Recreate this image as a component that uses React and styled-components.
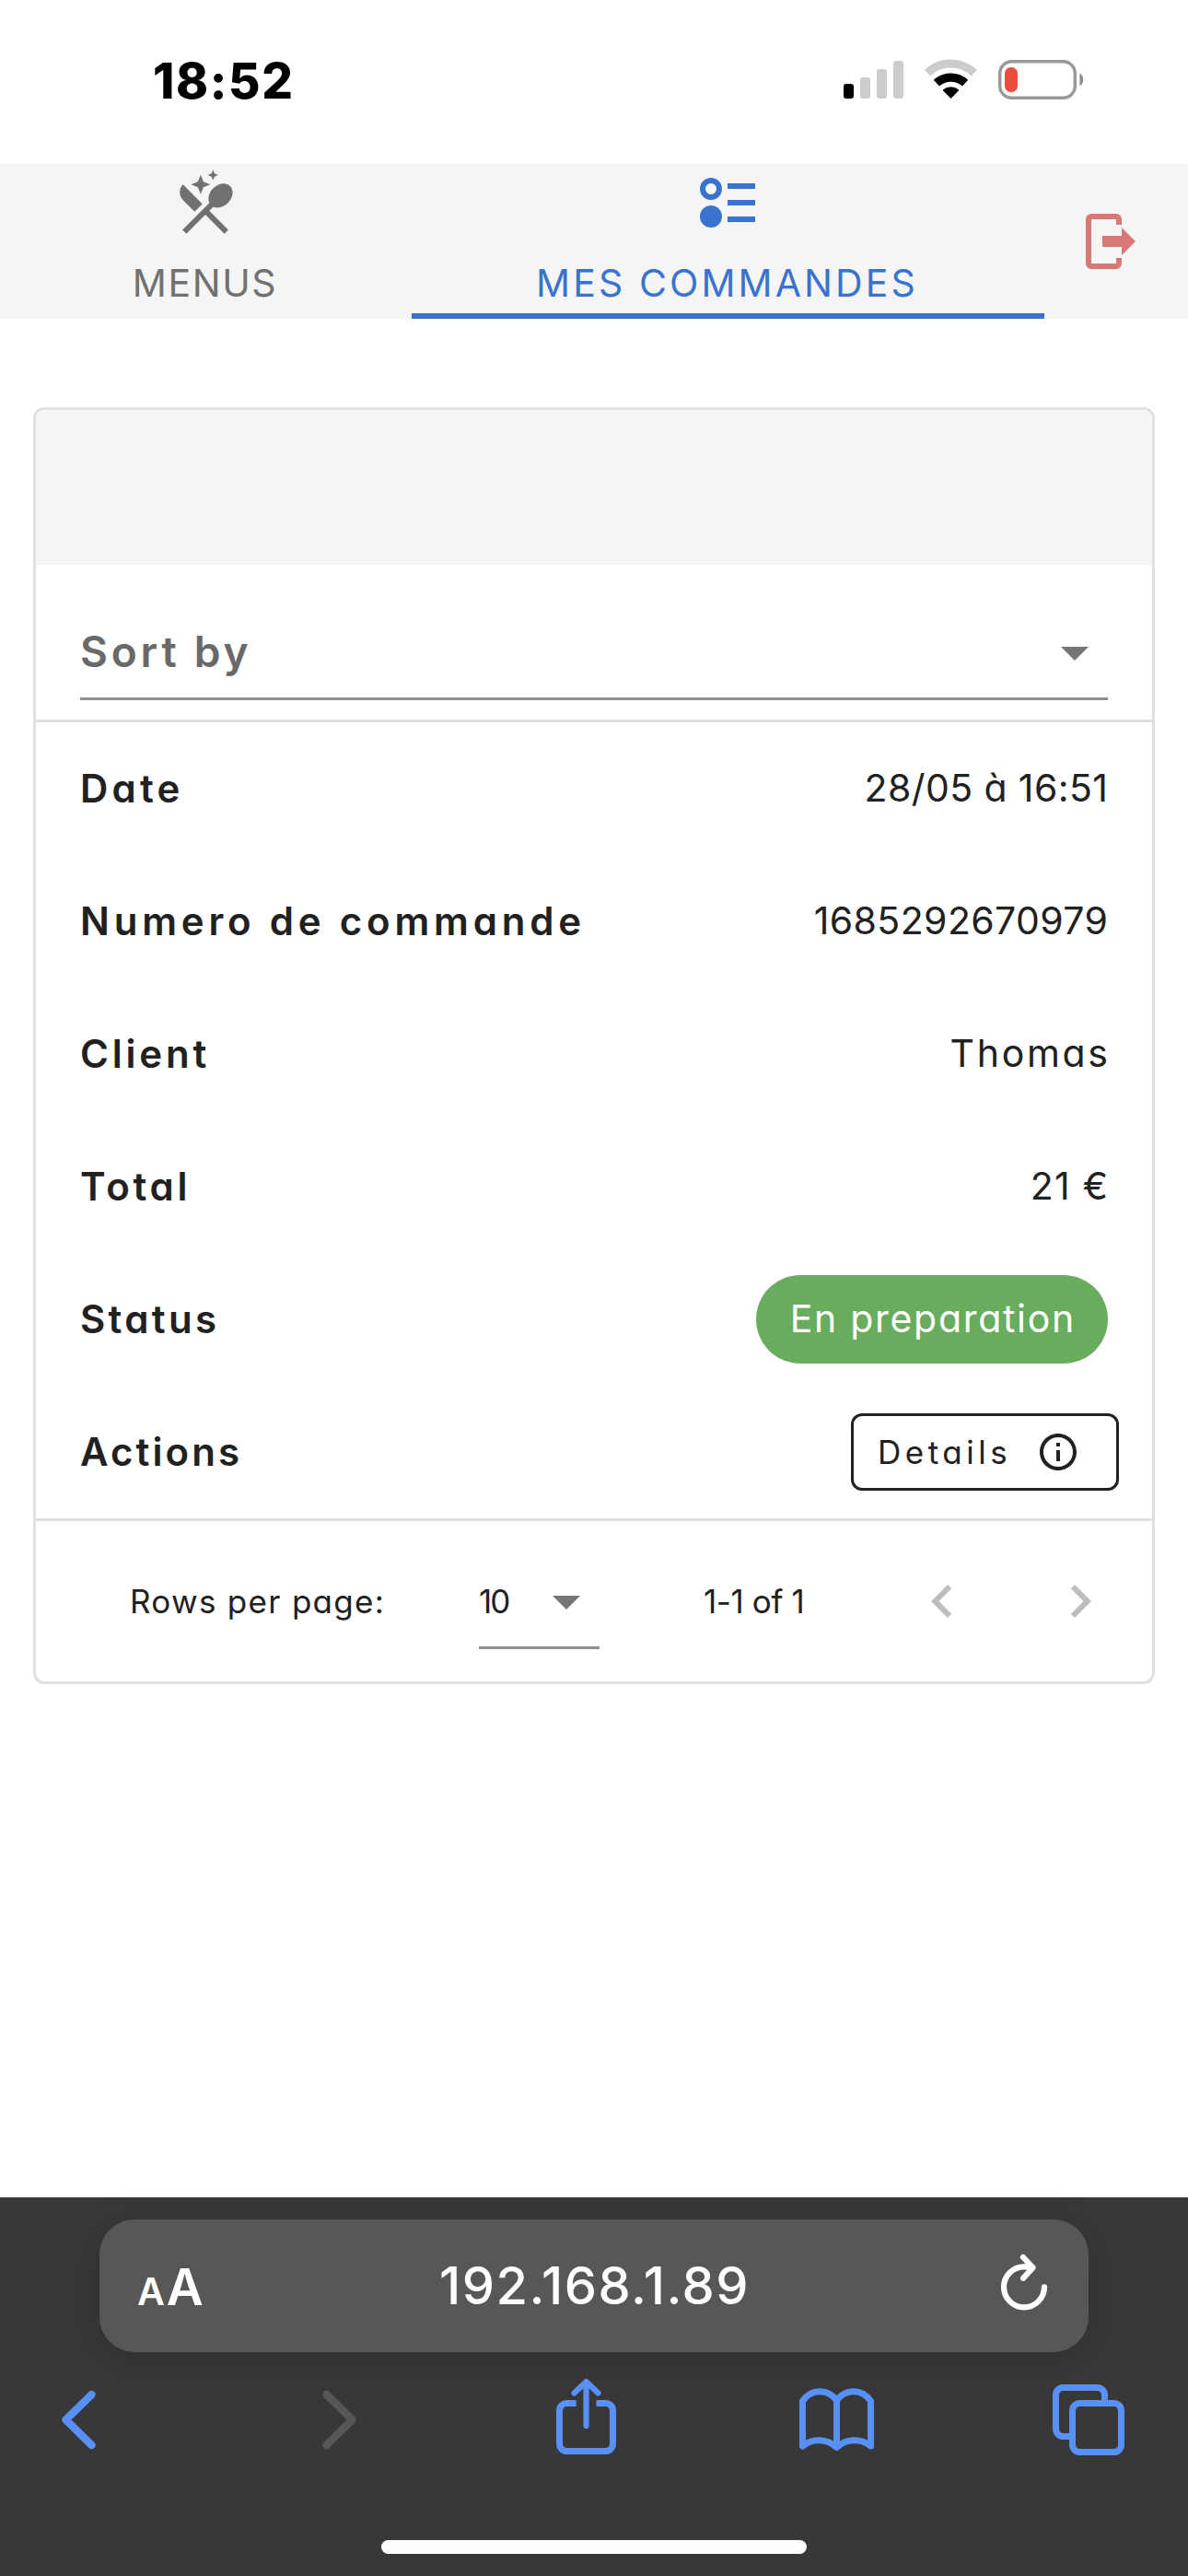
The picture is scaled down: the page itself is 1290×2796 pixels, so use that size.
import React from 'react';
import styled, { createGlobalStyle } from 'styled-components';

const GlobalStyle = createGlobalStyle`
  *, *::before, *::after { box-sizing: border-box; }
  body {
    margin: 0;
    background: #fff;
    font-family: Inter, Roboto, "Liberation Sans", sans-serif;
  }
`;

const ACCENT = '#3973cd';
const SAFARI_BLUE = '#5990f6';

/* ---------- shared ---------- */

const Screen = styled.div`
  display: flex;
  flex-direction: column;
  width: 1290px;
  height: 2796px;
  overflow: hidden;
  background: #fff;
  color: #212121;
`;

const Icon = styled.svg`
  display: block;
  flex: none;
  width: ${(p) => p.$w}px;
  height: ${(p) => p.$h ?? p.$w}px;
  fill: ${(p) => p.$fill ?? 'currentColor'};
  overflow: visible;
`;

const Label = styled.span`
  font-size: ${(p) => p.$size ?? 41}px;
  font-weight: ${(p) => p.$weight ?? 400};
  letter-spacing: ${(p) => p.$track ?? 0}px;
  margin-right: ${(p) => -(p.$track ?? 0)}px;
  line-height: 1.2;
  white-space: nowrap;
  font-feature-settings: 'cv11';
`;

/* ---------- status bar ---------- */

const StatusBar = styled.header`
  display: flex;
  flex: none;
  justify-content: space-between;
  height: 178px;
  padding: 56px 112px 0 166px;
`;

const Clock = styled.time`
  height: 64px;
  line-height: 64px;
  font-size: 53px;
  font-weight: 800;
  letter-spacing: 1.6px;
  color: #000;
`;

const StatusIcons = styled.div`
  display: flex;
  gap: 23px;
  padding-top: 9px;
`;

function StatusGlyphs() {
  return (
    <StatusIcons>
      <Icon $w={65} $h={43} viewBox="0 0 65 43">
        <rect x="0" y="26" width="11" height="16" rx="3" fill="#000" />
        <rect x="18" y="19" width="11" height="23" rx="3" fill="#ccc" />
        <rect x="36" y="10" width="11" height="32" rx="3" fill="#ccc" />
        <rect x="54" y="1" width="11" height="41" rx="3" fill="#ccc" />
      </Icon>
      <Icon $w={57} $h={43} viewBox="0 0 57 43" $fill="none">
        <path d="M3.1 14.2A36.8 36.8 0 0 1 53.9 14.2" stroke="#ccc" strokeWidth="9" />
        <path d="M12.9 25.2A22.8 22.8 0 0 1 44.1 25.2" stroke="#000" strokeWidth="9.2" />
        <path d="M28.5 42L20 33.2Q19.6 32.6 20.2 32.2A13.4 13.4 0 0 1 36.8 32.2Q37.4 32.6 37 33.2Z" fill="#000" />
      </Icon>
      <Icon $w={94} $h={43} viewBox="0 0 94 43" $fill="none">
        <rect x="1.7" y="1.7" width="81.6" height="39.6" rx="13" stroke="#999" strokeWidth="3.4" />
        <rect x="7" y="8" width="14" height="27" rx="6.5" fill="#eb4d3d" />
        <path d="M88.5 14.5A8.5 8.5 0 0 1 88.5 28.5Z" fill="#8c8c8c" />
      </Icon>
    </StatusIcons>
  );
}

/* ---------- tabs ---------- */

const TabBar = styled.nav`
  display: grid;
  grid-template-columns: 447px 687px 156px;
  flex: none;
  height: 168px;
  background: #f5f5f5;
`;

const Tab = styled.div`
  display: flex;
  flex-direction: column;
  align-items: center;
  gap: 27px;
  padding: 6px 1px 0 0;
  color: ${(p) => (p.$active ? ACCENT : '#717171')};
  box-shadow: ${(p) => (p.$active ? `inset 0 -6px ${ACCENT}` : 'none')};
`;

const TabLabel = styled(Label)`
  margin-right: 1px;
`;

const LogoutButton = styled.div`
  display: grid;
  place-items: center;
  color: #d77a77;
`;

/* ---------- orders table ---------- */

const Page = styled.main`
  flex: 1;
  padding: 96px 36px 0;
`;

const Card = styled.section`
  border: 3px solid #e0e0e0;
  border-radius: 12px;
  overflow: hidden;
`;

const CardHeader = styled.div`
  height: 168px;
  background: #f5f5f5;
`;

const SortArea = styled.div`
  height: 171px;
  padding: 44px 48px 0;
  border-bottom: 3px solid #e0e0e0;
`;

const SortSelect = styled.div`
  display: flex;
  align-items: center;
  justify-content: space-between;
  height: 103px;
  padding-top: 2px;
  border-bottom: 3px solid #919191;
  color: #696969;
`;

const SelectArrow = styled(Icon)`
  color: #757575;
`;

const Row = styled.div`
  display: flex;
  align-items: center;
  justify-content: space-between;
  height: 144px;
  padding: 0 48px;
`;

const StatusChip = styled.div`
  display: flex;
  align-items: center;
  justify-content: center;
  width: 382px;
  height: 96px;
  border-radius: 48px;
  background: #68ad5d;
  color: #fff;
`;

const DetailsButton = styled.div`
  display: flex;
  align-items: center;
  justify-content: space-between;
  width: 291px;
  height: 84px;
  margin-right: -12px;
  padding: 0 39px 0 26px;
  border: 3px solid #212121;
  border-radius: 12px;
`;

const Footer = styled.div`
  display: flex;
  align-items: center;
  height: 177px;
  padding: 0 42px 0 102px;
  border-top: 3px solid #e0e0e0;
`;

const PageSize = styled.div`
  display: flex;
  align-items: center;
  justify-content: space-between;
  width: 131px;
  height: 103px;
  margin: 0 113px 0 103px;
  padding-top: 3px;
  border-bottom: 3px solid #919191;
`;

const RowsLabel = styled.div`
  width: 276px;
`;

const Pager = styled.div`
  display: flex;
  gap: 78px;
  margin-left: auto;
  color: #bdbdbd;
`;

/* ---------- browser chrome ---------- */

const Browser = styled.footer`
  display: flex;
  flex: none;
  flex-direction: column;
  align-items: center;
  height: 411px;
  padding-top: 24px;
  background: #383838;
  color: #fff;
`;

const AddressBar = styled.div`
  display: grid;
  grid-template-columns: 1fr auto 1fr;
  align-items: center;
  flex: none;
  width: 1074px;
  height: 144px;
  padding: 0 45px 0 41px;
  border-radius: 38px;
  background: #575757;
  box-shadow: 0 8px 44px rgba(0, 0, 0, 0.16);
`;

const TextSize = styled.div`
  display: flex;
  align-items: baseline;
  gap: 2px;
  padding-top: 2px;
  line-height: 1.2;
  font-weight: 600;
`;

const Letter = styled.span`
  font-size: ${(p) => p.$size}px;
`;

const Address = styled.div`
  margin: 0 -1px 0 4px;
  font-size: 56px;
  font-weight: 500;
  line-height: 68px;
  letter-spacing: 1.5px;
`;

const Reload = styled(Icon)`
  justify-self: end;
  margin-bottom: 8px;
`;

const Toolbar = styled.div`
  display: grid;
  grid-template-columns: 283px 254px 264px 275px 1fr;
  flex: 1;
  width: 100%;
  padding: 28px 0 0 67px;
  color: ${SAFARI_BLUE};
`;

const HomeIndicator = styled.div`
  flex: none;
  width: 462px;
  height: 15px;
  margin-bottom: 24px;
  border-radius: 8px;
  background: #fdfdfd;
`;

const line = {
  fill: 'none',
  stroke: 'currentColor',
  strokeWidth: 7,
  strokeLinecap: 'round',
  strokeLinejoin: 'round',
};

const rows = [
  { label: 'Date', track: 4.2, value: '28/05 à 16:51', valueTrack: 0.4 },
  { label: 'Numero de commande', track: 4.8, value: '1685292670979', valueTrack: 0.4 },
  { label: 'Client', track: 3.8, value: 'Thomas', valueTrack: 2.7 },
  { label: 'Total', track: 3.7, value: '21 €', valueTrack: 1.2 },
];

export default function App() {
  return (
    <Screen>
      <GlobalStyle />
      <StatusBar>
        <Clock>18:52</Clock>
        <StatusGlyphs />
      </StatusBar>

      <TabBar>
        <Tab>
          <Icon $w={72} viewBox="0 0 24 24">
            <path transform="translate(0 1.95)" d="M8.1 13.34l2.83-2.83L3.91 3.5a4.008 4.008 0 0 0 0 5.66l4.19 4.18zm6.78-1.81c1.53.71 3.68.21 5.27-1.38 1.91-1.91 2.28-4.65.81-6.12-1.46-1.46-4.2-1.1-6.12.81-1.59 1.59-2.09 3.74-1.38 5.27L3.7 19.87l1.41 1.41L12 14.41l6.88 6.88 1.41-1.41L13.41 13l1.47-1.47z" />
            <path d="M10.3 1.95l1 2.5 2.5 1-2.5 1-1 2.5-1-2.5-2.5-1 2.5-1z" />
            <path d="M14.75 .1l.55 1.35 1.35.55-1.35.55-.55 1.35-.55-1.35-1.35-.55 1.35-.55z" />
          </Icon>
          <TabLabel $track={1.6}>MENUS</TabLabel>
        </Tab>
        <Tab $active>
          <Icon $w={72} viewBox="0 0 24 24">
            <circle cx="6" cy="7" r="3" fill="none" stroke="currentColor" strokeWidth="2" />
            <circle cx="6" cy="17" r="4" />
            <path d="M12 5h10v2H12zM12 11h10v2H12zM12 17h10v2H12z" />
          </Icon>
          <TabLabel $track={3.1}>MES COMMANDES</TabLabel>
        </Tab>
        <LogoutButton>
          <Icon $w={72} viewBox="0 0 24 24">
            <path d="M3 2h9a2 2 0 0 1 2 2v2h-2V4H3v16h9v-2h2v2a2 2 0 0 1-2 2H3a2 2 0 0 1-2-2V4a2 2 0 0 1 2-2z" />
            <path d="M7 10h7V7l5 5-5 5v-3H7z" />
          </Icon>
        </LogoutButton>
      </TabBar>

      <Page>
        <Card>
          <CardHeader />
          <SortArea>
            <SortSelect>
              <Label $size={46} $weight={600} $track={3.8}>Sort by</Label>
              <SelectArrow $w={72} viewBox="0 0 24 24">
                <path d="M7 10l5 5 5-5z" />
              </SelectArrow>
            </SortSelect>
          </SortArea>

          {rows.map((row) => (
            <Row key={row.label}>
              <Label $size={42} $weight={600} $track={row.track}>{row.label}</Label>
              <Label $track={row.valueTrack}>{row.value}</Label>
            </Row>
          ))}
          <Row>
            <Label $size={42} $weight={600} $track={3.3}>Status</Label>
            <StatusChip>
              <Label $track={1.7}>En preparation</Label>
            </StatusChip>
          </Row>
          <Row>
            <Label $size={42} $weight={600} $track={3.1}>Actions</Label>
            <DetailsButton>
              <Label $size={35} $track={4.5}>Details</Label>
              <Icon $w={48} viewBox="0 0 24 24">
                <path d="M11 7h2v2h-2zm0 4h2v6h-2zm1-9C6.48 2 2 6.48 2 12s4.48 10 10 10 10-4.48 10-10S17.52 2 12 2zm0 18c-4.41 0-8-3.59-8-8s3.59-8 8-8 8 3.59 8 8-3.59 8-8 8z" />
              </Icon>
            </DetailsButton>
          </Row>

          <Footer>
            <RowsLabel>
              <Label $size={35} $track={1.3}>Rows per page:</Label>
            </RowsLabel>
            <PageSize>
              <Label $size={35} $track={-2}>10</Label>
              <SelectArrow $w={72} viewBox="0 0 24 24">
                <path d="M7 10l5 5 5-5z" />
              </SelectArrow>
            </PageSize>
            <Label $size={35} $track={-0.4}>1-1 of 1</Label>
            <Pager>
              <Icon $w={72} viewBox="0 0 24 24">
                <path d="M15.41 7.41L14 6l-6 6 6 6 1.41-1.41L10.83 12z" />
              </Icon>
              <Icon $w={72} viewBox="0 0 24 24">
                <path d="M8.59 16.59L13.17 12 8.59 7.41 10 6l6 6-6 6z" />
              </Icon>
            </Pager>
          </Footer>
        </Card>
      </Page>

      <Browser>
        <AddressBar>
          <TextSize>
            <Letter $size={41}>A</Letter>
            <Letter $size={55}>A</Letter>
          </TextSize>
          <Address>192.168.1.89</Address>
          <Reload $w={50} $h={62} viewBox="0 0 50 62">
            <path {...line} strokeWidth={6.2} d="M34.3 15.3C31 14.4 28 14.3 25 14.3A22 22 0 1 0 47 36.3M24 4L34.5 15.4L24 26.8" />
          </Reload>
        </AddressBar>

        <Toolbar>
          <Icon $w={37} $h={84} viewBox="0 0 37 84">
            <path {...line} strokeWidth={8.4} d="M32.5 18L4.5 45.5L32.5 73" />
          </Icon>
          <Icon $w={37} $h={84} viewBox="0 0 37 84">
            <path {...line} stroke="#575757" strokeWidth={8.4} d="M4.5 18L32.5 45.5L4.5 73" />
          </Icon>
          <Icon $w={65} $h={84} viewBox="0 0 65 84">
            <path {...line} strokeLinecap="butt" d="M21.7 27.5H11.5a8 8 0 0 0-8 8V71.5a8 8 0 0 0 8 8H53.5a8 8 0 0 0 8-8V35.5a8 8 0 0 0-8-8H43.5" />
            <path {...line} strokeWidth={6.2} d="M32.5 52V4.5M19.5 16.5L32.5 4L45.5 16.5" />
          </Icon>
          <Icon $w={81} $h={84} viewBox="0 0 81 84">
            <path {...line} d="M3.5 74V25C13 11.5 31 11.5 40.5 24.5C50 11.5 68 11.5 77.5 25V74C67 65.5 51 65.5 40.5 75.5C30 65.5 14 65.5 3.5 74ZM40.5 25V75" />
          </Icon>
          <Icon $w={78} $h={84} viewBox="0 0 78 84">
            <path {...line} strokeLinecap="butt" d="M18 63.5H11.5a8 8 0 0 1-8-8V18.5a8 8 0 0 1 8-8H48.5a8 8 0 0 1 8 8V25" />
            <rect {...line} x="21.5" y="27.5" width="53" height="53" rx="8" />
          </Icon>
        </Toolbar>
        <HomeIndicator />
      </Browser>
    </Screen>
  );
}
